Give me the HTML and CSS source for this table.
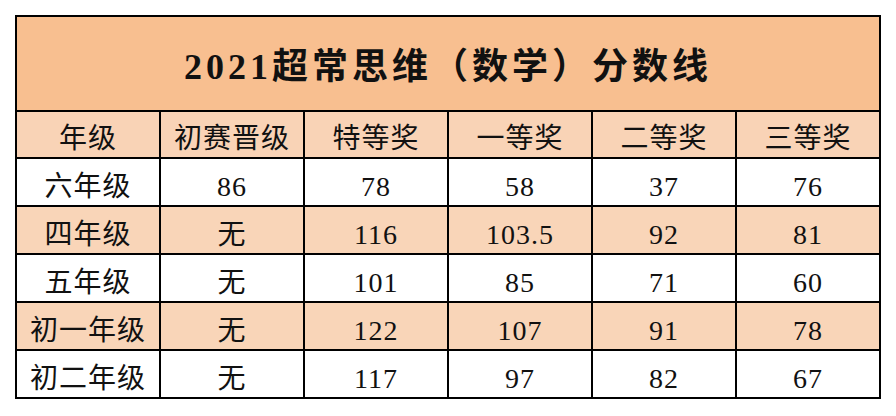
FILE: index.html
```html
<!DOCTYPE html>
<html lang="zh-CN">
<head>
<meta charset="utf-8">
<title>2021超常思维（数学）分数线</title>
<link rel="stylesheet" href="styles.css">
</head>
<body>
<table class="score-table">
  <colgroup>
    <col class="col"><col class="col"><col class="col"><col class="col"><col class="col"><col class="col">
  </colgroup>
  <thead>
    <tr class="title-row"><th colspan="6" class="title">2021超常思维（数学）分数线</th></tr>
    <tr class="head-row">
      <th>年级</th><th>初赛晋级</th><th>特等奖</th><th>一等奖</th><th>二等奖</th><th>三等奖</th>
    </tr>
  </thead>
  <tbody>
    <tr class="row plain"><td>六年级</td><td>86</td><td>78</td><td>58</td><td>37</td><td>76</td></tr>
    <tr class="row shade"><td>四年级</td><td>无</td><td>116</td><td>103.5</td><td>92</td><td>81</td></tr>
    <tr class="row plain"><td>五年级</td><td>无</td><td>101</td><td>85</td><td>71</td><td>60</td></tr>
    <tr class="row shade"><td>初一年级</td><td>无</td><td>122</td><td>107</td><td>91</td><td>78</td></tr>
    <tr class="row plain"><td>初二年级</td><td>无</td><td>117</td><td>97</td><td>82</td><td>67</td></tr>
  </tbody>
</table>
</body>
</html>
```
FILE: styles.css
```css
html, body {
  margin: 0;
  padding: 0;
  background: #ffffff;
}

body {
  padding: 15px 0 0 15px;
  font-family: "Liberation Serif", "Noto Sans CJK SC", serif;
  color: #111111;
}

.score-table {
  table-layout: fixed;
  width: 866px;
  border-collapse: separate;
  border-spacing: 0;
  border-top: 2px solid #000;
  border-left: 2px solid #000;
}

.score-table th,
.score-table td {
  border-right: 2px solid #000;
  border-bottom: 2px solid #000;
  padding: 0;
  text-align: center;
  vertical-align: middle;
  font-weight: 400;
  font-size: 28px;
  letter-spacing: 1px;
  line-height: 28px;
  box-sizing: border-box;
}

.score-table .title {
  height: 95px;
  background: #f8bf90;
  font-size: 36px;
  letter-spacing: 4px;
  font-weight: 700;
  line-height: 36px;
  padding-top: 6px;
}

.head-row th {
  height: 47px;
  background: #f9d3b6;
  padding-top: 9px;
}

.row td {
  height: 48px;
  padding-top: 9px;
}

.shade td {
  background: #f9d5b8;
}

.plain td {
  background: #ffffff;
}
```
